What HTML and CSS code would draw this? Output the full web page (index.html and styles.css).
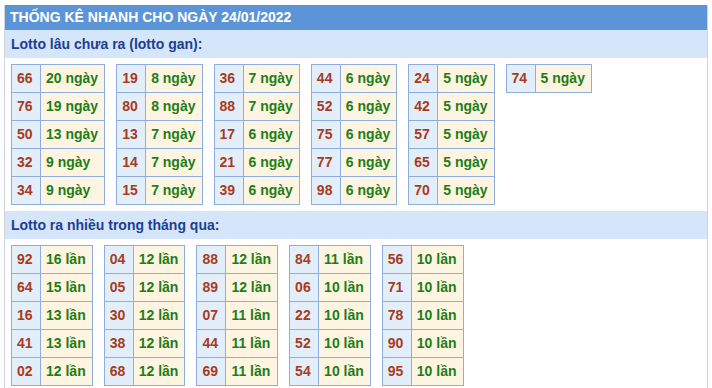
FILE: index.html
```html
<!DOCTYPE html>
<html lang="vi">
<head>
<meta charset="utf-8">
<title>Thống kê nhanh</title>
<link rel="stylesheet" href="styles.css">
</head>
<body>
<div class="box">
  <div class="head">THỐNG KÊ NHANH CHO NGÀY 24/01/2022</div>
  <div class="sub">Lotto lâu chưa ra (lotto gan):</div>
  <div class="tables">
    <table><tbody>
      <tr><td class="n">66</td><td class="v">20 ngày</td></tr>
      <tr><td class="n">76</td><td class="v">19 ngày</td></tr>
      <tr><td class="n">50</td><td class="v">13 ngày</td></tr>
      <tr><td class="n">32</td><td class="v">9 ngày</td></tr>
      <tr><td class="n">34</td><td class="v">9 ngày</td></tr>
    </tbody></table>
    <table><tbody>
      <tr><td class="n">19</td><td class="v">8 ngày</td></tr>
      <tr><td class="n">80</td><td class="v">8 ngày</td></tr>
      <tr><td class="n">13</td><td class="v">7 ngày</td></tr>
      <tr><td class="n">14</td><td class="v">7 ngày</td></tr>
      <tr><td class="n">15</td><td class="v">7 ngày</td></tr>
    </tbody></table>
    <table><tbody>
      <tr><td class="n">36</td><td class="v">7 ngày</td></tr>
      <tr><td class="n">88</td><td class="v">7 ngày</td></tr>
      <tr><td class="n">17</td><td class="v">6 ngày</td></tr>
      <tr><td class="n">21</td><td class="v">6 ngày</td></tr>
      <tr><td class="n">39</td><td class="v">6 ngày</td></tr>
    </tbody></table>
    <table><tbody>
      <tr><td class="n">44</td><td class="v">6 ngày</td></tr>
      <tr><td class="n">52</td><td class="v">6 ngày</td></tr>
      <tr><td class="n">75</td><td class="v">6 ngày</td></tr>
      <tr><td class="n">77</td><td class="v">6 ngày</td></tr>
      <tr><td class="n">98</td><td class="v">6 ngày</td></tr>
    </tbody></table>
    <table><tbody>
      <tr><td class="n">24</td><td class="v">5 ngày</td></tr>
      <tr><td class="n">42</td><td class="v">5 ngày</td></tr>
      <tr><td class="n">57</td><td class="v">5 ngày</td></tr>
      <tr><td class="n">65</td><td class="v">5 ngày</td></tr>
      <tr><td class="n">70</td><td class="v">5 ngày</td></tr>
    </tbody></table>
    <table><tbody>
      <tr><td class="n">74</td><td class="v">5 ngày</td></tr>
    </tbody></table>
  </div>
  <div class="sub">Lotto ra nhiều trong tháng qua:</div>
  <div class="tables">
    <table><tbody>
      <tr><td class="n">92</td><td class="v">16 lần</td></tr>
      <tr><td class="n">64</td><td class="v">15 lần</td></tr>
      <tr><td class="n">16</td><td class="v">13 lần</td></tr>
      <tr><td class="n">41</td><td class="v">13 lần</td></tr>
      <tr><td class="n">02</td><td class="v">12 lần</td></tr>
    </tbody></table>
    <table><tbody>
      <tr><td class="n">04</td><td class="v">12 lần</td></tr>
      <tr><td class="n">05</td><td class="v">12 lần</td></tr>
      <tr><td class="n">30</td><td class="v">12 lần</td></tr>
      <tr><td class="n">38</td><td class="v">12 lần</td></tr>
      <tr><td class="n">68</td><td class="v">12 lần</td></tr>
    </tbody></table>
    <table><tbody>
      <tr><td class="n">88</td><td class="v">12 lần</td></tr>
      <tr><td class="n">89</td><td class="v">12 lần</td></tr>
      <tr><td class="n">07</td><td class="v">11 lần</td></tr>
      <tr><td class="n">44</td><td class="v">11 lần</td></tr>
      <tr><td class="n">69</td><td class="v">11 lần</td></tr>
    </tbody></table>
    <table><tbody>
      <tr><td class="n">84</td><td class="v">11 lần</td></tr>
      <tr><td class="n">06</td><td class="v">10 lần</td></tr>
      <tr><td class="n">22</td><td class="v">10 lần</td></tr>
      <tr><td class="n">52</td><td class="v">10 lần</td></tr>
      <tr><td class="n">54</td><td class="v">10 lần</td></tr>
    </tbody></table>
    <table><tbody>
      <tr><td class="n">56</td><td class="v">10 lần</td></tr>
      <tr><td class="n">71</td><td class="v">10 lần</td></tr>
      <tr><td class="n">78</td><td class="v">10 lần</td></tr>
      <tr><td class="n">90</td><td class="v">10 lần</td></tr>
      <tr><td class="n">95</td><td class="v">10 lần</td></tr>
    </tbody></table>
  </div>
</div>
</body>
</html>
```
FILE: styles.css
```css
html, body {
  margin: 0;
  padding: 0;
  background: #ffffff;
}
body {
  font-family: "Liberation Sans", Arial, sans-serif;
  font-size: 14px;
  font-weight: bold;
}
.box {
  margin: 5px 4px 0 4px;
  border-left: 1px solid #cfd3da;
  border-right: 1px solid #cfd3da;
  min-height: 400px;
}
.head {
  height: 25px;
  line-height: 25px;
  padding-left: 5px;
  background: #5b95d7;
  color: #ffffff;
}
.sub {
  height: 28px;
  line-height: 28px;
  padding-left: 6px;
  background: #d5e6fa;
  color: #1d3e93;
}
.tables {
  display: flex;
  align-items: flex-start;
  gap: 11px;
  padding: 6px 6px 6px 6px;
}
table {
  border-collapse: collapse;
}
td {
  border: 1px solid #8eaee0;
  line-height: 27px;
  white-space: nowrap;
}
td.n {
  width: 16px;
  padding: 0 7px 0 5px;
  background: #e3eefb;
  color: #a83b1c;
}
td.v {
  padding: 0 6px 0 5px;
  background: #fef4e2;
  color: #1e7d17;
}
```
